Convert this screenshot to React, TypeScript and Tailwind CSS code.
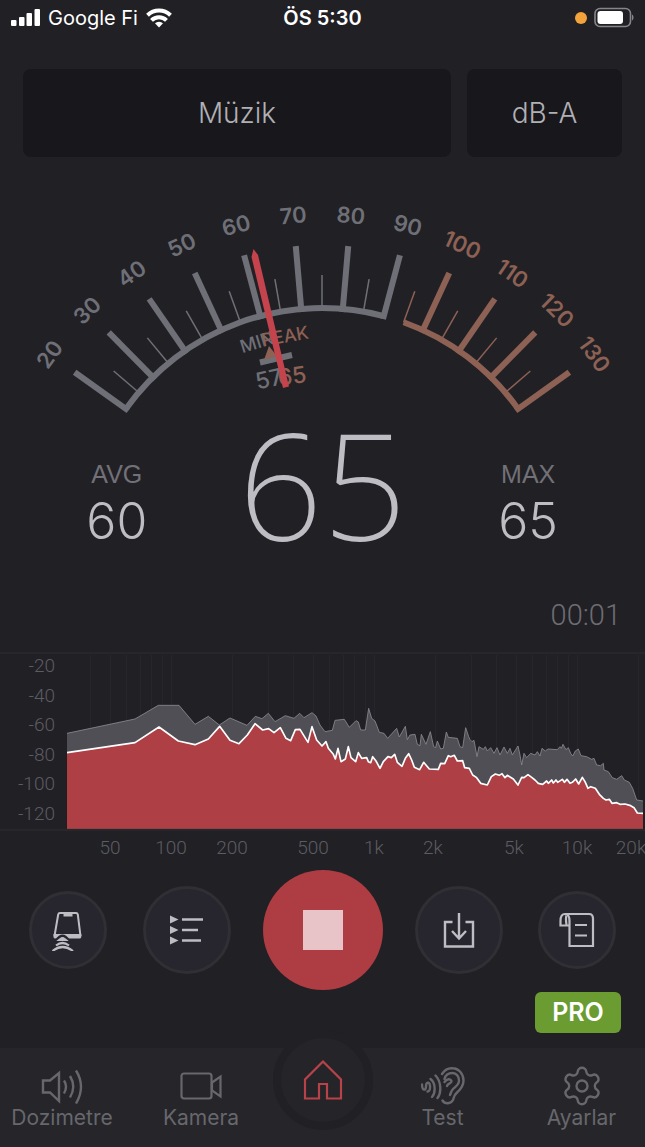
import { Settings } from 'lucide-react'

const CX = 322
const CY = 360
const GREY = '#6f7077'
const COPPER = '#8d6154'

const toAngle = (db: number) => (db - 75) * 0.99

const polar = (r: number, deg: number) => {
  const a = (deg * Math.PI) / 180
  return [CX + r * Math.sin(a), CY - r * Math.cos(a)]
}

const arc = (r: number, from: number, to: number) => {
  const [x1, y1] = polar(r, from)
  const [x2, y2] = polar(r, to)
  return `M${x1} ${y1}A${r} ${r} 0 0 1 ${x2} ${y2}`
}

const majors = [20, 30, 40, 50, 60, 70, 80, 90, 100, 110, 120, 130]
const minors = [25, 35, 45, 55, 65, 75, 85, 95, 105, 115, 125]

// spectrum samples, three units per pixel
const peakCurve =
  '201,265 405,222 475,181 537,181 585,238 625,214 658,240 690,219 741,241 766,214 786,221 805,205 825,230 856,212 882,220 899,205 912,218 936,203 948,213 960,240 975,260 997,256 1005,226 1033,223 1048,247 1068,227 1075,231 1082,255 1096,255 1106,190 1115,220 1125,228 1138,262 1152,265 1163,280 1190,250 1198,276 1216,244 1222,284 1230,270 1245,268 1252,298 1260,302 1264,268 1278,298 1291,260 1301,305 1307,308 1312,288 1322,312 1330,310 1339,261 1345,277 1372,280 1380,305 1388,308 1397,248 1406,275 1410,284 1416,290 1422,286 1431,335 1437,305 1450,313 1456,305 1462,318 1472,308 1482,325 1491,308 1500,330 1512,306 1522,325 1530,310 1537,330 1554,303 1560,330 1565,360 1572,325 1580,338 1592,325 1605,330 1612,320 1620,333 1626,310 1636,318 1644,312 1672,314 1680,305 1684,310 1689,298 1698,314 1705,308 1712,325 1718,333 1726,318 1735,312 1743,332 1760,335 1775,343 1782,340 1790,360 1802,362 1810,355 1812,375 1825,380 1837,398 1850,403 1865,392 1873,405 1888,412 1898,430 1910,465 1929,468'
const liveCurve =
  '201,323 405,293 477,246 535,288 585,299 625,282 659,244 690,286 717,296 742,270 765,236 788,255 806,251 822,263 841,248 858,280 872,287 886,254 900,253 924,292 936,245 950,285 966,303 978,290 985,310 1000,328 1006,342 1014,310 1023,350 1036,342 1045,305 1053,338 1067,350 1075,323 1085,340 1100,338 1105,350 1112,353 1118,335 1128,348 1140,370 1150,350 1164,335 1174,338 1184,328 1192,352 1206,364 1216,340 1226,326 1235,345 1243,367 1259,374 1271,352 1288,372 1315,373 1322,355 1334,356 1345,332 1352,335 1363,331 1372,348 1388,347 1394,368 1408,370 1418,390 1430,398 1442,415 1462,420 1474,395 1486,387 1498,391 1506,386 1515,398 1522,391 1540,402 1554,420 1565,397 1572,398 1584,389 1595,397 1605,405 1615,415 1628,418 1640,408 1645,415 1655,405 1660,414 1668,405 1673,412 1687,403 1693,412 1701,403 1710,415 1717,412 1727,402 1736,417 1747,397 1755,410 1764,430 1772,425 1786,430 1798,448 1810,460 1818,465 1828,463 1836,475 1850,473 1860,478 1875,477 1892,482 1902,488 1912,504 1929,505'

const freqX = (f: number) => 171 + 203 * (Math.log10(f) - 2)
const gridFreqs = [
  40, 50, 60, 70, 80, 90, 100, 200, 300, 400, 500, 600, 700, 800, 900, 1000, 2000, 3000, 4000, 5000,
  6000, 7000, 8000, 9000, 10000, 20000,
]
const freqLabels: [string, number][] = [
  ['50', 110], ['100', 171], ['200', 232], ['500', 313], ['1k', 374], ['2k', 433], ['5k', 514], ['10k', 577], ['20k', 631],
]

const StatusBar = () => (
  <header className="flex h-9 items-center justify-between px-[11px] text-white">
    <div className="flex flex-1 items-center gap-2">
      <svg width="29" height="20" viewBox="0 0 29 20" fill="currentColor">
        <rect x="0" y="12" width="5.500" height="6" rx="1" />
        <rect x="8" y="9" width="5.500" height="9" rx="1" />
        <rect x="15.500" y="5" width="5.500" height="13" rx="1" />
        <rect x="23.500" y="1" width="5.500" height="17" rx="1" />
      </svg>
      <span className="text-[20px]">Google Fi</span>
      <svg width="26" height="20" viewBox="0 0 26 20" fill="none" stroke="currentColor" strokeWidth="4">
        <path d="M1.500 7.200a16.500 16.500 0 0 1 23 0" />
        <path d="M5.500 12.300a10.500 10.500 0 0 1 15 0" />
        <path d="M13 19.500l-4-4.200a5.800 5.800 0 0 1 8 0z" fill="currentColor" stroke="none" />
      </svg>
    </div>
    <span className="text-[20px] font-semibold">ÖS 5:30</span>
    <div className="flex flex-1 items-center justify-end gap-[7px]">
      <span className="size-3 rounded-full bg-[#f2a33c]" />
      <svg width="40" height="22" viewBox="0 0 40 22" fill="none">
        <rect x="1" y="1.500" width="35.500" height="18" rx="5" stroke="#85858a" strokeWidth="1.600" />
        <rect x="3.500" y="4" width="25.500" height="13" rx="3" fill="#fff" />
        <path d="M38 7.500c2 1 2 5 0 6z" fill="#85858a" />
      </svg>
    </div>
  </header>
)

const Gauge = () => (
  <svg viewBox="0 0 645 230" className="mt-8 w-full" fill="none">
    <path d={arc(241, toAngle(20), toAngle(90))} stroke={GREY} strokeWidth="6" />
    <path d={arc(241, toAngle(95), toAngle(130))} stroke={COPPER} strokeWidth="6" />
    {minors.map((db) => {
      const [x1, y1] = polar(241, toAngle(db))
      const [x2, y2] = polar(274, toAngle(db))
      return <line key={db} x1={x1} y1={y1} x2={x2} y2={y2} stroke={db > 90 ? COPPER : GREY} strokeWidth="1.5" />
    })}
    {majors.map((db) => {
      const [x1, y1] = polar(238, toAngle(db))
      const [x2, y2] = polar(304, toAngle(db))
      const [tx, ty] = polar(335, toAngle(db))
      const color = db > 90 ? COPPER : GREY
      return (
        <g key={db}>
          <line x1={x1} y1={y1} x2={x2} y2={y2} stroke={color} strokeWidth="6" />
          <text
            transform={`translate(${tx} ${ty}) rotate(${toAngle(db)})`}
            textAnchor="middle"
            dominantBaseline="central"
            fontSize="22"
            fontWeight="600"
            fill={color}
          >
            {db}
          </text>
        </g>
      )
    })}

    {/* min / peak markers */}
    <g textAnchor="middle" dominantBaseline="central" fontWeight="500">
      <text transform="translate(257 153) rotate(-17)" fontSize="18" fill={GREY}>MIN</text>
      <text transform="translate(269 190) rotate(-13)" fontSize="23" fill={GREY}>57</text>
      <path d="M260 173.500L292 166" stroke={GREY} strokeWidth="6" />
      <path d="M269 157l8 10-13 4z" fill={COPPER} />
      <text transform="translate(285 147) rotate(-10)" fontSize="18" fill={COPPER}>PEAK</text>
      <text transform="translate(292 187) rotate(-8)" fontSize="23" fill={COPPER}>65</text>
    </g>

    <path d="M253.500 60l4.500 6 31 131.500-6 1.500L251.500 68z" fill="#c5434c" />
  </svg>
)

const SideValue = ({ label, value }: { label: string; value: number }) => (
  <div className="flex flex-col items-center pt-10">
    <span className="font-['Liberation_Sans'] text-[25px] leading-[30px] text-[#717177]">{label}</span>
    <span className="text-[50px] font-light leading-[64px] text-[#bdbdc3]">{value}</span>
  </div>
)

const Spectrum = () => (
  <svg viewBox="0 0 645 215" className="mt-5 w-full font-['Roboto']" fill="none">
    <path d="M0 2h645M0 179h645" stroke="#2d2d32" />
    {gridFreqs.map((f) => (
      <path key={f} d={`M${Math.round(freqX(f)) + 0.5} 4V178`} stroke="#27262b" />
    ))}
    <g transform="translate(0 -6) scale(0.33333)">
      <polygon points={`${peakCurve} 1929,551 201,551`} fill="#504f56" />
      <polyline points={peakCurve} stroke="#8a8a90" strokeWidth="2.500" />
      <polygon points={`${liveCurve} 1929,551 201,551`} fill="#ad3f45" />
      <polyline points={liveCurve} stroke="#fff" strokeWidth="5" strokeLinejoin="round" />
    </g>
    <g fontSize="19" fontWeight="300" fill="#5c5c62">
      {[-20, -40, -60, -80, -100, -120].map((v, i) => (
        <text key={v} x="55" y={21 + i * 29.6} textAnchor="end">{v}</text>
      ))}
      {freqLabels.map(([label, x]) => (
        <text key={label} x={x} y="203" textAnchor="middle">{label}</text>
      ))}
    </g>
  </svg>
)

const RoundButton = ({ label, small, children }: { label: string; small?: boolean; children: React.ReactNode }) => (
  <button
    aria-label={label}
    className={`flex items-center justify-center rounded-full border-[3px] border-[#2f2f34] bg-[#27262e] text-[#bdbdc3] ${
      small ? 'size-[78px]' : 'size-[88px]'
    }`}
  >
    {children}
  </button>
)

const Controls = () => (
  <div className="mt-1 flex items-center justify-between px-[29px]">
    <RoundButton label="Telefon" small>
      <svg width="40" height="42" viewBox="0 0 40 42" fill="none" stroke="currentColor" strokeWidth="2">
        <path d="M6.500 27L10.200 5.500Q10.500 4 12 4H28Q29.500 4 29.800 5.500L32.500 27" />
        <path d="M5.500 25H33.300V28Q33 29.500 31.500 29.500H7.500Q5.500 29.500 5.500 28z" fill="currentColor" stroke="none" />
        <path d="M15.500 5.500H24.500" strokeWidth="4" />
        <path d="M8.500 31Q14.500 22.500 20.500 31" stroke="#27262e" strokeWidth="2.500" />
        <path d="M11 31Q14.500 28 18 31z" fill="currentColor" />
        <path d="M8 36.500Q14.500 31.500 21 36.500M4.500 42Q14.500 34 25 42" strokeWidth="2.200" />
      </svg>
    </RoundButton>
    <div className="flex items-center gap-8">
      <RoundButton label="Liste">
        <svg width="34" height="32" viewBox="0 0 34 32" fill="currentColor">
          <path d="M0 1.500l8.500 4-8.500 4zM0 12l8.500 4-8.500 4zM0 22.500l8.500 4-8.500 4z" />
          <path d="M12 4.300h21v2.500H12zM12 14.800h16v2.500H12zM12 25.200h19v2.500H12z" />
        </svg>
      </RoundButton>
      <button aria-label="Durdur" className="flex size-[120px] items-center justify-center rounded-full bg-[#ad3c43]">
        <span className="size-10 bg-[#e8c3c8]" />
      </button>
      <RoundButton label="Kaydet">
        <svg width="34" height="36" viewBox="0 0 34 36" fill="none" stroke="currentColor" strokeWidth="2.400">
          <path d="M10.500 10H3v24.500h28V10h-7.500M17 1v25M10 19l7 7.500 7-7.500" />
        </svg>
      </RoundButton>
    </div>
    <RoundButton label="Kayıtlar" small>
      <svg width="36" height="36" viewBox="0 0 36 36" fill="none" stroke="currentColor" strokeWidth="2.200">
        <path d="M6 2h24q4 0 4 4.500V34H10.500V9Q10.500 2 6 2T1.500 9v4.500h9" />
        <path d="M7.500 3.500Q6.500 6 7.500 13M16 13h12M16 23.500h12" />
      </svg>
    </RoundButton>
  </div>
)

const NavItem = ({ label, children }: { label: string; children: React.ReactNode }) => (
  <a href="#" className="flex min-w-0 flex-col items-center pt-4 text-[#67676c]">
    <span className="flex h-11 items-center">{children}</span>
    <span className="text-[21px] leading-5">{label}</span>
  </a>
)

const BottomNav = () => (
  <nav className="mt-auto grid h-[99px] grid-cols-[124fr_154fr_89fr_151fr_127fr] bg-[#25252a]">
    <NavItem label="Dozimetre">
      <svg width="42" height="36" viewBox="0 0 42 36" fill="none" stroke="currentColor" strokeWidth="2.400">
        <path d="M2 12.500h7L18 5v28l-9-8.500H2z" />
        <path d="M23 12.500q4 6 0 13M29 8q6.500 10.500 0 21.500M35 2.500q10 16 0 33" />
      </svg>
    </NavItem>
    <NavItem label="Kamera">
      <svg width="42" height="28" viewBox="0 0 42 28" fill="none" stroke="currentColor" strokeWidth="2.200">
        <rect x="1.500" y="1.500" width="30" height="25" rx="2.500" />
        <path d="M32 10.500l8.500-6v20l-8.500-6z" />
      </svg>
    </NavItem>
    <a
      href="#"
      aria-label="Ana sayfa"
      className="z-10 -mx-2 -mt-[18px] flex size-[100px] items-center justify-center self-start justify-self-center rounded-full border-8 border-[#212025] bg-[#242429]"
    >
      <svg width="42" height="42" viewBox="0 0 42 42" fill="none" stroke="#b8424a" strokeWidth="2.200">
        <path d="M21 2.500L3 20.500V39.500h14V25h8v14.500H39V20.500z" />
      </svg>
    </a>
    <NavItem label="Test">
      <svg width="44" height="38" viewBox="0 0 44 38" fill="none" stroke="currentColor" strokeWidth="2.400" strokeLinecap="round">
        <path d="M21 7C24 2.500 28 1 31.500 1.300 38 1.500 42.500 7 42.500 13.500c0 6-3 9-6.500 12-3 2.500-3 5-4 7.500-2 4-8 4.500-10.500.500" />
        <path d="M23.500 12c1-4 4-6 8-6 4 0 6.500 3.500 6.500 7.500 0 4.500-3.500 6-6 8.500-2 2-2 4-3 6" />
        <path d="M23.500 15c2.500-3.500 6-3.500 7-1 .5 2.500-4 2-4.500 5" />
        <path d="M1 17.500c0 6.500 4 6.500 4 2s3.500-5.500 4-.5c.3 4-1 5.500-2.500 5.500M9.500 12c5.500 4 5 14.500 1.500 18M14.500 8.500c6 6 6 17.500 2 22.500" />
      </svg>
    </NavItem>
    <NavItem label="Ayarlar">
      <Settings size={44} strokeWidth={1.3} />
    </NavItem>
  </nav>
)

const App = () => {
  return (
    <div className="flex min-h-screen flex-col overflow-hidden bg-[#212025] font-['Inter',sans-serif]">
      <StatusBar />
      <div className="mt-[33px] flex gap-4 px-[23px]">
        <button className="h-[88px] flex-1 rounded-lg bg-[#18171b] text-[28px] font-light text-[#b0b0b5]">Müzik</button>
        <button className="h-[88px] w-[155px] rounded-lg bg-[#18171b] text-[28px] font-light text-[#b0b0b5]">dB-A</button>
      </div>

      <Gauge />

      <section className="grid grid-cols-3 px-3.5">
        <SideValue label="AVG" value={60} />
        <span className="text-center font-['Noto_Sans'] text-[148px] font-extralight leading-[130px] text-[#bdbdc3]">65</span>
        <SideValue label="MAX" value={65} />
      </section>
      <time className="mt-[46px] px-6 text-right font-['Roboto'] text-[29px] font-light leading-8 text-[#6d6d73]">00:01</time>

      <Spectrum />
      <Controls />

      <button className="mr-6 mt-0.5 h-[41px] w-[86px] self-end rounded-md bg-[#6a9c31] text-[25px] font-semibold text-white">
        PRO
      </button>

      <BottomNav />
    </div>
  )
}

export default App
